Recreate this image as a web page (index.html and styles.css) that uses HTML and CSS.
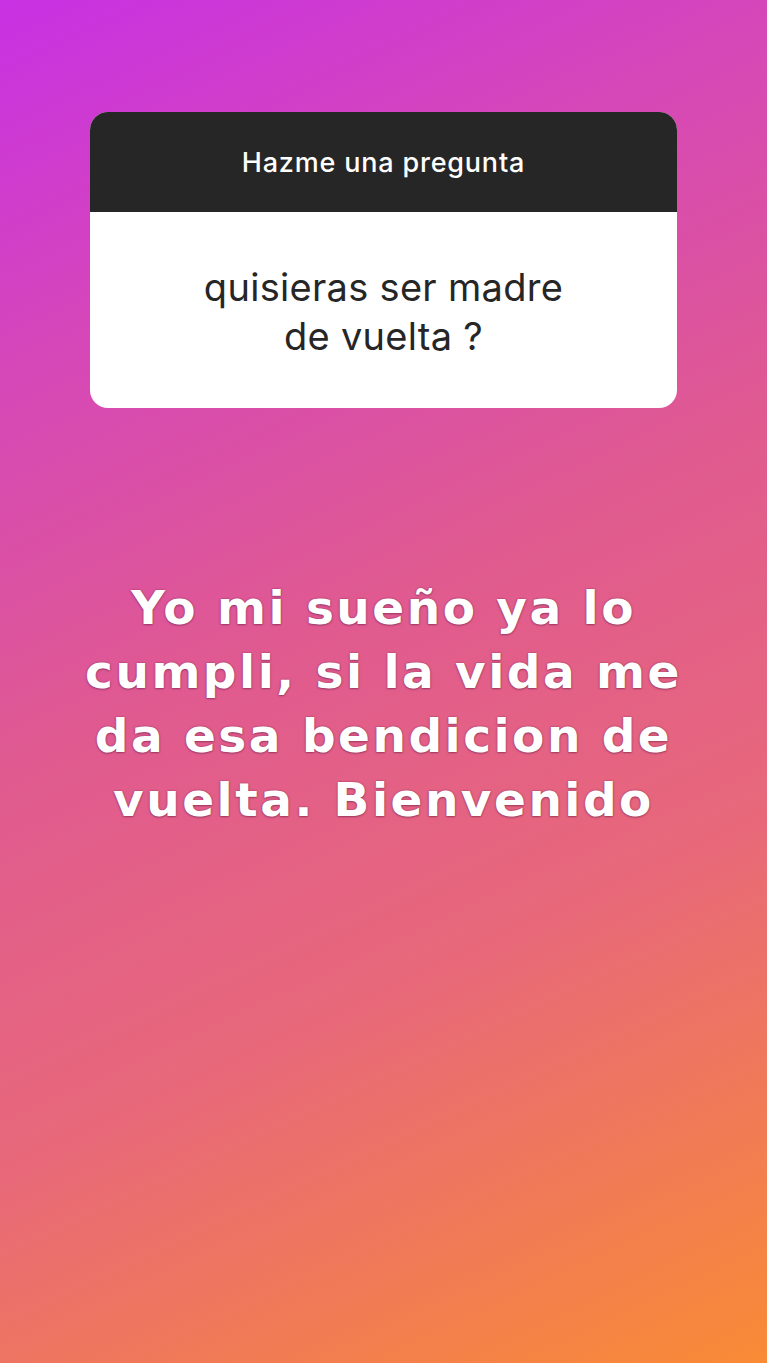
FILE: index.html
```html
<!DOCTYPE html>
<html lang="es">
<head>
<meta charset="utf-8">
<title>Story</title>
<link rel="stylesheet" href="styles.css">
</head>
<body>
<main class="story">
  <section class="qcard">
    <header class="qcard-head">Hazme una pregunta</header>
    <div class="qcard-body">
      <p class="qcard-text">quisieras ser madre<br>de vuelta ?</p>
    </div>
  </section>
  <p class="answer">Yo mi sueño ya lo<br>cumpli, si la vida me<br>da esa bendicion de<br>vuelta. Bienvenido</p>
</main>
</body>
</html>
```
FILE: styles.css
```css
html, body {
  margin: 0;
  padding: 0;
}
body {
  width: 767px;
  height: 1363px;
  overflow: hidden;
}
.story {
  width: 767px;
  height: 1363px;
  background: linear-gradient(155deg, #c731e3 0%, #d647b8 22%, #e05a90 45%, #e8687a 68%, #f98b35 100%);
  display: flex;
  flex-direction: column;
  align-items: center;
  padding-top: 112px;
  box-sizing: border-box;
}
.qcard {
  width: 587px;
  border-radius: 18px;
  overflow: hidden;
  background: #ffffff;
}
.qcard-head {
  height: 100px;
  background: #262626;
  color: #ffffff;
  font-family: Inter, "Liberation Sans", Arial, sans-serif;
  font-weight: 500;
  font-size: 27px;
  letter-spacing: 0.8px;
  display: flex;
  align-items: center;
  justify-content: center;
}
.qcard-body {
  height: 196px;
  display: flex;
  align-items: center;
  justify-content: center;
}
.qcard-text {
  margin: 4px 0 0;
  text-align: center;
  color: #262626;
  font-family: Inter, "Liberation Sans", Arial, sans-serif;
  font-size: 38px;
  letter-spacing: 0.3px;
  line-height: 49px;
}
.answer {
  margin: 168px 0 0;
  text-align: center;
  color: #ffffff;
  font-family: "DejaVu Sans", sans-serif;
  font-weight: bold;
  font-size: 47px;
  letter-spacing: 2.5px;
  line-height: 64px;
  text-shadow: 0 0 2px rgba(90, 20, 60, 0.55), 0 1px 2px rgba(90, 20, 60, 0.4);
}
```
